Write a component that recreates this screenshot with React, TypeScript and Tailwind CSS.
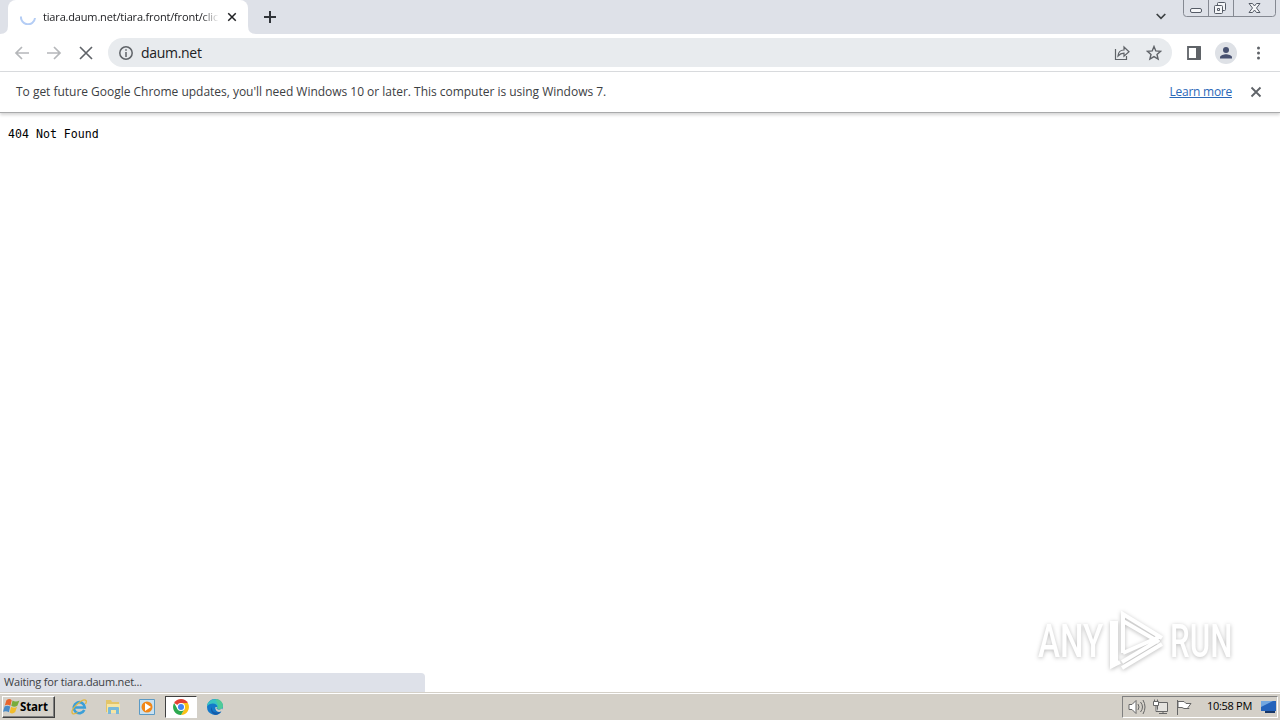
import type { SVGProps } from "react"

export default function App() {
  return (
    <div className="flex h-[720px] w-[1280px] flex-col overflow-hidden bg-white font-['Open_Sans','Noto_Sans',sans-serif] text-[#202124]">
      <TabStrip />
      <Toolbar />
      <InfoBar />
      <main className="relative flex min-h-0 flex-1 flex-col justify-between">
        <pre className="pt-[14px] pl-2 font-['DejaVu_Sans_Mono',monospace] text-[11.6px] leading-[14px] text-black">404 Not Found</pre>
        <div className="flex h-[19px] w-[425px] items-center rounded-tr-[4px] bg-[#dee1e9] pl-[4px] text-[11px] tracking-[-0.19px] text-[#3c4043]">
          Waiting for tiara.daum.net...
        </div>
        <Watermark />
      </main>
      <Taskbar />
    </div>
  )
}

function TabStrip() {
  return (
    <header className="flex h-[34px] shrink-0 items-end bg-[#dee1e8]">
      <svg className="h-2 w-2" viewBox="0 0 8 8" fill="#fff">
        <path d="M8 0v8H0q8 0 8-8z" />
      </svg>
      <div className="flex h-full w-60 items-center rounded-t-lg bg-white">
        <svg className="ml-3 h-4 w-4 shrink-0" viewBox="0 0 16 16" fill="none" stroke="#b4cdf5" strokeWidth="2">
          <path d="M1 7.5a7 7 0 0 0 14 1.5" />
        </svg>
        <span className="ml-[7px] w-[176px] overflow-hidden text-[11px] tracking-[-0.17px] whitespace-nowrap [mask-image:linear-gradient(to_right,#000_90%,transparent)]">
          tiara.daum.net/tiara.front/front/click
        </span>
        <CloseIcon className="ml-[8px] h-[10px] w-[10px] shrink-0" strokeWidth="1.8" />
      </div>
      <svg className="h-2 w-2" viewBox="0 0 8 8" fill="#fff">
        <path d="M0 0v8h8Q0 8 0 0z" />
      </svg>
      <svg className="mt-[11px] ml-2 h-3 w-3 self-start" viewBox="0 0 12 12" stroke="#303439" strokeWidth="2">
        <path d="M6 0v12M0 6h12" />
      </svg>
      <svg className="mt-[13px] ml-auto h-[7px] w-[10px] self-start" viewBox="0 0 10 7" fill="none" stroke="#3c4043" strokeWidth="1.7">
        <path d="m.7 1 4.3 4.3L9.3 1" />
      </svg>
      <WindowButtons />
    </header>
  )
}

function WindowButtons() {
  return (
    <svg className="mr-[3px] ml-[17px] h-[18px] w-[94px] self-start" viewBox="0 0 94 18" fill="none" stroke="#858992">
      <path d="M.5 0v13.5q0 3 3 3h86q3 0 3-3V0M25.5 0v16M50.5 0v16" />
      <g fill="#f5f6f8" stroke="#555b66">
        <rect x="7.5" y="8.5" width="11" height="4" rx="1.5" />
        <rect x="34.5" y="2.5" width="8" height="8" rx="1" />
        <rect x="31.5" y="5.500" width="8" height="8" rx="1" />
        <path d="M34.5 8.500h2v2h-2z" />
        <path d="M66 3.500h3.500L71.500 6l2-2.500H77L73.500 8l3.500 4.500h-3.500l-2-2.500-2 2.500H66L69.500 8z" />
      </g>
    </svg>
  )
}

function Toolbar() {
  return (
    <nav className="flex h-[38px] shrink-0 items-center border-b border-[#d9dbde] pl-[14px] text-[#5f6368]">
      <ArrowIcon className="h-4 w-4 text-[#b5b7ba]" />
      <ArrowIcon className="ml-4 h-4 w-4 rotate-180 text-[#b5b7ba]" />
      <CloseIcon className="ml-4 h-4 w-4" strokeWidth="1.25" />
      <div className="ml-[14px] flex h-[29px] w-[1064px] items-center rounded-full bg-[#e8ebee] pl-[11px]">
        <svg className="h-[14px] w-[14px]" viewBox="0 0 14 14" fill="none" stroke="currentColor" strokeWidth="1.5">
          <circle cx="7" cy="7" r="6.2" />
          <path d="M7 3.3v1.5M7 6v5" />
        </svg>
        <span className="ml-2 text-[14px] tracking-[-0.3px] text-[#202124]">daum.net</span>
        <svg className="mr-4 ml-auto h-4 w-4" viewBox="0 0 16 16" fill="none" stroke="currentColor" strokeWidth="1.2">
          <path d="M1.5 4v10.500h11V11" />
          <path d="M4 11c.3-4 2.300-6 6-6V2l5 4.700-5 4.500V8.200C7.500 8.200 5.700 9 4 11z" />
        </svg>
        <svg className="mr-[10px] h-4 w-4" viewBox="0 0 16 16" fill="none" stroke="currentColor" strokeWidth="1.4">
          <path d="m8 1.500 1.800 4.400 4.800.4-3.600 3.100 1.100 4.700L8 11.600l-4.100 2.500L5 9.400 1.400 6.300l4.800-.4z" />
        </svg>
      </div>
      <svg className="ml-[15px] h-[14px] w-[14px]" viewBox="0 0 14 14">
        <path d="M1 1h12v12H1z" fill="none" stroke="currentColor" strokeWidth="1.8" />
        <path d="M9 1h5v12H9z" fill="currentColor" />
      </svg>
      <svg className="ml-[14px] h-[22px] w-[22px]" viewBox="0 0 22 22">
        <circle cx="11" cy="11" r="11" fill="#dee1e6" />
        <circle cx="11" cy="8" r="3" fill="#475170" />
        <path d="M5 16.500v-1.300c0-2 4-3 6-3s6 1 6 3v1.300z" fill="#475170" />
      </svg>
      <svg className="ml-[17px] h-4 w-4" viewBox="0 0 16 16" fill="currentColor">
        <circle cx="4.5" cy="3" r="1.5" />
        <circle cx="4.5" cy="8" r="1.5" />
        <circle cx="4.5" cy="13" r="1.5" />
      </svg>
    </nav>
  )
}

function InfoBar() {
  return (
    <section className="flex h-[41px] shrink-0 items-center border-b border-[#a9aaab] pr-[18px] pl-4 text-[12px] text-[#3c4043] shadow-[0_2px_3px_#d5d5d5]">
      <span className="tracking-[-0.02px]">To get future Google Chrome updates, you'll need Windows 10 or later. This computer is using Windows 7.</span>
      <a className="ml-auto tracking-[-0.25px] text-[#2b68b8] underline" href="#">Learn more</a>
      <CloseIcon className="ml-[18px] h-3 w-3 text-[#5f6368]" strokeWidth="1.8" />
    </section>
  )
}

function Watermark() {
  return (
    <div className="absolute right-[44px] bottom-[20px] flex h-[62px] w-[198px] items-center justify-between font-['Roboto',sans-serif] text-[46px] font-medium text-white [filter:drop-shadow(0_1px_2px_#bbb)]">
      <span className="w-[66px] origin-left scale-x-[0.72]">ANY</span>
      <svg className="absolute left-[70px] h-[62px] w-[58px]" viewBox="0 0 58 62" fill="none" stroke="white" strokeWidth="4">
        <path d="M15 43V4l39 24M15 11l36 21M15 43l36-16M4 11v45l8-4M8 11v42M14 58l40-24M14 52l37-22" />
      </svg>
      <span className="w-[66px] origin-left scale-x-[0.68]">RUN</span>
    </div>
  )
}

function Taskbar() {
  return (
    <footer className="flex h-7 shrink-0 items-center border-t border-[#d4d0c8] bg-[#d4d0c8] shadow-[inset_0_1px_#fff]">
      <button className="ml-[2px] flex h-[22px] w-[53px] shrink-0 items-center border border-t-white border-r-[#404040] border-b-[#404040] border-l-white text-[11.5px] font-bold text-black shadow-[inset_-1px_-1px_#808080]">
        <WindowsIcon className="h-[17px] w-[17px] shrink-0" />
        <span className="tracking-[-0.15px]">Start</span>
      </button>
      <IeIcon className="ml-4 h-4 w-4" />
      <FolderIcon className="ml-[18px] h-4 w-4" />
      <PlayerIcon className="ml-[18px] h-4 w-4" />
      <div className="ml-[10px] flex h-[22px] w-8 items-center justify-center border border-t-[#404040] border-r-white border-b-white border-l-[#404040] bg-white">
        <ChromeIcon className="h-4 w-4" />
      </div>
      <EdgeIcon className="ml-[10px] h-4 w-4" />
      <div className="mr-[2px] ml-auto flex h-[22px] w-[156px] shrink-0 items-center border border-t-[#808080] border-r-white border-b-white border-l-[#808080] pl-[5px] text-[11px] text-black">
        <TrayIcons />
        <span className="ml-[13px] tracking-[-0.3px] whitespace-nowrap">10:58 PM</span>
        <svg className="mr-px ml-auto h-4 w-4 shrink-0" viewBox="0 0 16 16">
          <path d="M1 2h15v10H1z" fill="#2463bb" />
          <path d="M1 2h12L1 8z" fill="#72a7e0" />
          <path d="M5 12h10v2H5z" fill="#173768" />
        </svg>
      </div>
    </footer>
  )
}

function TrayIcons() {
  return (
    <svg className="h-4 w-[66px] shrink-0" viewBox="0 0 66 16" fill="#fff" stroke="#666">
      <path d="M1 5.5h3l4-4v13l-4-4H1z" />
      <path d="M10 5q2 3 0 6M12.5 3q4 5 0 10M15 1q4 7 0 14" fill="none" />
      <path d="M29.5 3.500h10v9h-10zM31 14.500h8M35 12v2" fill="#e5e3df" />
      <path d="M25.5 2.500h5v4h-5zM26.500.5v2M29.500.5v2M28 7v5.500h2" />
      <path d="M49.5 1v15" />
      <path d="M50 2.500h6l2 2h5l-3 4 1 1h-5l-2-1h-4z" />
    </svg>
  )
}

function CloseIcon(props: SVGProps<SVGSVGElement>) {
  return (
    <svg viewBox="0 0 12 12" fill="none" stroke="currentColor" {...props}>
      <path d="m1.5 1.500 9 9m0-9-9 9" />
    </svg>
  )
}

function ArrowIcon(props: SVGProps<SVGSVGElement>) {
  return (
    <svg viewBox="0 0 16 16" fill="none" stroke="currentColor" strokeWidth="1.7" {...props}>
      <path d="M15 8H2m6-6L2 8l6 6" />
    </svg>
  )
}

function WindowsIcon(props: SVGProps<SVGSVGElement>) {
  return (
    <svg viewBox="0 0 16 16" {...props}>
      <path d="M3.200 2q3-2 5 0L7 7.300Q4 5.500 1.700 7z" fill="#e9652c" />
      <path d="M9 2.300q3 2 6.500 0l-2 5q-3 2-5.700 0z" fill="#78ac3c" />
      <path d="M1.500 8Q4 6.500 6.800 8l-1.300 5.500Q3 11.500 0 13z" fill="#498bc7" />
      <path d="M7.600 8.200q3 2 5.600 0l-1.700 5Q9 15.500 6.300 13.700z" fill="#f1bc2b" />
    </svg>
  )
}

function IeIcon(props: SVGProps<SVGSVGElement>) {
  return (
    <svg viewBox="0 0 16 16" fill="none" {...props}>
      <path d="M13.300 11a5.500 5.500 0 1 1 .5-2.500H4" stroke="#3b9fd8" strokeWidth="2.6" />
      <path d="M1.500 14.500C-1.500 10.500 12-1.500 15 1.500c.7.800.3 2-.5 3.500M1.500 14.500c1 .8 3 .2 5-1" stroke="#e2b73e" strokeWidth="1.3" />
    </svg>
  )
}

function FolderIcon(props: SVGProps<SVGSVGElement>) {
  return (
    <svg viewBox="0 0 16 16" {...props}>
      <path d="M1 1h5l1 2h7v10H1z" fill="#e3c569" />
      <path d="M2 5h13v9H2z" fill="#f6e5a3" />
      <path d="M3 15V9q0-1 1-1h9q1 0 1 1v6h-3v-4H6v4z" fill="#78b9da" />
    </svg>
  )
}

function PlayerIcon(props: SVGProps<SVGSVGElement>) {
  return (
    <svg viewBox="0 0 16 16" {...props}>
      <path d="M.5.5h15v15H.5z" fill="#c9e1f1" stroke="#5b9ac5" />
      <circle cx="8" cy="8" r="5.5" fill="#f18718" />
      <path d="m6 4 6 4-6 4z" fill="#fff" />
    </svg>
  )
}

function ChromeIcon(props: SVGProps<SVGSVGElement>) {
  return (
    <svg viewBox="0 0 16 16" {...props}>
      <path d="M8 8 1.100 4A8 8 0 0 1 14.900 4z" fill="#e34133" />
      <path d="M8 8V4h6.900A8 8 0 0 1 8 16l3.500-6z" fill="#fbc116" />
      <path d="m8 8 3.500 2L8 16A8 8 0 0 1 1.100 4l3.400 6z" fill="#2da94f" />
      <circle cx="8" cy="8" r="4" fill="#fff" />
      <circle cx="8" cy="8" r="3" fill="#4285f4" />
    </svg>
  )
}

function EdgeIcon(props: SVGProps<SVGSVGElement>) {
  return (
    <svg viewBox="0 0 16 16" {...props}>
      <path d="M0 8a8 8 0 0 1 16 0c0 2-1 3-3 3H9c1 2 3 2.500 5.500 1.500A8 8 0 0 1 0 8z" fill="#1479c9" />
      <path d="M0 7C1-2 15-2 16 7c0 4-5 4-6 2 2-4-5-7-10-2z" fill="#39c3c2" />
      <path d="M9 .1C13 0 16 3 16 7c0 4-5 4-6 2 3-3-1-5-1-9z" fill="#5bd083" opacity=".65" />
      <path d="M5 8c-1 5 4 7 9 4.500C11 17 5 17 4 11c-.2-1 .2-2 1-3z" fill="#155ba9" />
      <path d="M8.500 8c-1 3 2 5 6 4l1-3c-2 2-4 2-5.500 1-.8-.5-.5-1 0-2z" fill="#d4d0c8" />
    </svg>
  )
}
